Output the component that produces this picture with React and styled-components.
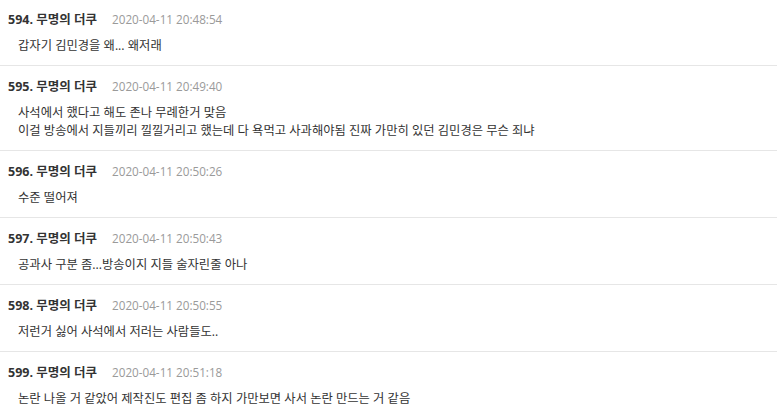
import React from 'react';
import styled, { createGlobalStyle } from 'styled-components';

const GlobalStyle = createGlobalStyle`
  html, body {
    margin: 0;
    padding: 0;
    background: #fff;
  }
  body {
    font-family: 'Open Sans', 'Noto Sans CJK KR', sans-serif;
    color: #333;
    overflow: hidden;
  }
`;

const CommentList = styled.div`
  margin-top: -1px;
`;

const Comment = styled.div`
  padding: 12px 8px 10px;
  border-bottom: 1px solid #e6e6e6;
`;

const Header = styled.div`
  display: flex;
  align-items: baseline;
  gap: 15px;
  height: 16px;
  line-height: 16px;
`;

const Author = styled.span`
  font-size: 12.5px;
  font-weight: 700;
  color: #333;
`;

const Date = styled.span`
  font-size: 11.7px;
  color: #9a9a9a;
`;

const Body = styled.div`
  margin: 10px 0 0 10px;
  font-size: 12.3px;
  line-height: 18px;
  color: #333;
`;

const comments = [
  { no: 594, date: '2020-04-11 20:48:54', lines: ['갑자기 김민경을 왜... 왜저래'] },
  {
    no: 595,
    date: '2020-04-11 20:49:40',
    lines: [
      '사석에서 했다고 해도 존나 무례한거 맞음',
      '이걸 방송에서 지들끼리 낄낄거리고 했는데 다 욕먹고 사과해야됨 진짜 가만히 있던 김민경은 무슨 죄냐',
    ],
  },
  { no: 596, date: '2020-04-11 20:50:26', lines: ['수준 떨어져'] },
  { no: 597, date: '2020-04-11 20:50:43', lines: ['공과사 구분 좀...방송이지 지들 술자린줄 아나'] },
  { no: 598, date: '2020-04-11 20:50:55', lines: ['저런거 싫어 사석에서 저러는 사람들도..'] },
  { no: 599, date: '2020-04-11 20:51:18', lines: ['논란 나올 거 같았어 제작진도 편집 좀 하지 가만보면 사서 논란 만드는 거 같음'] },
];

export default function App() {
  return (
    <>
      <GlobalStyle />
      <CommentList>
        {comments.map((c) => (
          <Comment key={c.no}>
            <Header>
              <Author>{c.no}. 무명의 더쿠</Author>
              <Date>{c.date}</Date>
            </Header>
            <Body>
              {c.lines.map((l, i) => (
                <div key={i}>{l}</div>
              ))}
            </Body>
          </Comment>
        ))}
      </CommentList>
    </>
  );
}
